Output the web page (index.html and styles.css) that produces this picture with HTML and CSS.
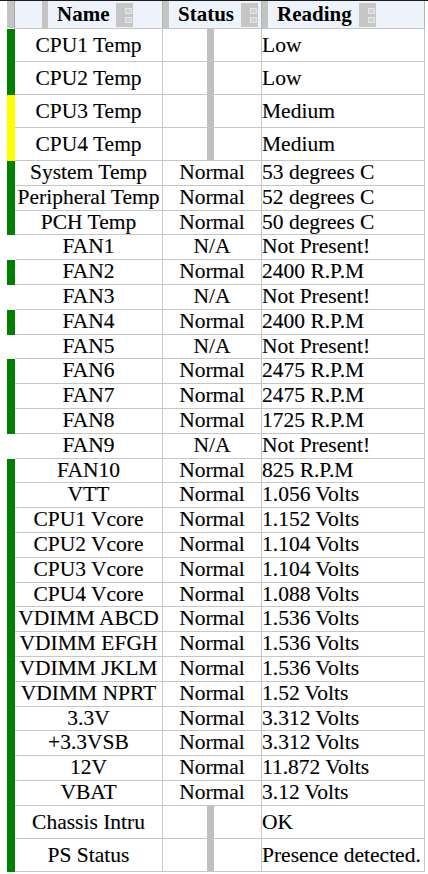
FILE: index.html
```html
<!DOCTYPE html>
<html>
<head>
<meta charset="utf-8">
<link rel="stylesheet" href="styles.css">
</head>
<body>
<table class="grid">
  <colgroup>
    <col class="c-ind"><col class="c-name"><col class="c-status"><col class="c-read">
  </colgroup>
  <thead>
    <tr>
      <th class="ind"></th>
      <th class="name-h"><div class="hc"><span class="grip"></span><span class="lbl">Name</span><svg class="sort" width="17" height="24" viewBox="0 0 17 24"><rect width="17" height="24" fill="#c6c6c6"/><rect x="9.5" y="5.5" width="6" height="5" fill="#d2d2d2" stroke="#e6e6e6"/><rect x="9.5" y="14.5" width="6" height="5" fill="#d2d2d2" stroke="#e6e6e6"/></svg></div></th>
      <th><div class="hc"><span class="grip"></span><span class="lbl">Status</span><svg class="sort" width="17" height="24" viewBox="0 0 17 24"><rect width="17" height="24" fill="#c6c6c6"/><rect x="9.5" y="5.5" width="6" height="5" fill="#d2d2d2" stroke="#e6e6e6"/><rect x="9.5" y="14.5" width="6" height="5" fill="#d2d2d2" stroke="#e6e6e6"/></svg></div></th>
      <th><div class="hc"><span class="grip"></span><span class="lbl">Reading</span><svg class="sort" width="17" height="24" viewBox="0 0 17 24"><rect width="17" height="24" fill="#c6c6c6"/><rect x="9.5" y="5.5" width="6" height="5" fill="#d2d2d2" stroke="#e6e6e6"/><rect x="9.5" y="14.5" width="6" height="5" fill="#d2d2d2" stroke="#e6e6e6"/></svg></div></th>
    </tr>
  </thead>
  <tbody>
    <tr class="tall"><td class="ind g"></td><td class="nm">CPU1 Temp</td><td class="st"></td><td class="rd">Low</td></tr>
    <tr class="tall"><td class="ind g"></td><td class="nm">CPU2 Temp</td><td class="st"></td><td class="rd">Low</td></tr>
    <tr class="tall"><td class="ind y"></td><td class="nm">CPU3 Temp</td><td class="st"></td><td class="rd">Medium</td></tr>
    <tr class="tall"><td class="ind y"></td><td class="nm">CPU4 Temp</td><td class="st"></td><td class="rd">Medium</td></tr>
    <tr><td class="ind g"></td><td class="nm">System Temp</td><td class="st">Normal</td><td class="rd">53 degrees C</td></tr>
    <tr><td class="ind g"></td><td class="nm">Peripheral Temp</td><td class="st">Normal</td><td class="rd">52 degrees C</td></tr>
    <tr><td class="ind g"></td><td class="nm">PCH Temp</td><td class="st">Normal</td><td class="rd">50 degrees C</td></tr>
    <tr><td class="ind"></td><td class="nm">FAN1</td><td class="st">N/A</td><td class="rd">Not Present!</td></tr>
    <tr><td class="ind g"></td><td class="nm">FAN2</td><td class="st">Normal</td><td class="rd">2400 R.P.M</td></tr>
    <tr><td class="ind"></td><td class="nm">FAN3</td><td class="st">N/A</td><td class="rd">Not Present!</td></tr>
    <tr><td class="ind g"></td><td class="nm">FAN4</td><td class="st">Normal</td><td class="rd">2400 R.P.M</td></tr>
    <tr><td class="ind"></td><td class="nm">FAN5</td><td class="st">N/A</td><td class="rd">Not Present!</td></tr>
    <tr><td class="ind g"></td><td class="nm">FAN6</td><td class="st">Normal</td><td class="rd">2475 R.P.M</td></tr>
    <tr><td class="ind g"></td><td class="nm">FAN7</td><td class="st">Normal</td><td class="rd">2475 R.P.M</td></tr>
    <tr><td class="ind g"></td><td class="nm">FAN8</td><td class="st">Normal</td><td class="rd">1725 R.P.M</td></tr>
    <tr><td class="ind"></td><td class="nm">FAN9</td><td class="st">N/A</td><td class="rd">Not Present!</td></tr>
    <tr><td class="ind g"></td><td class="nm">FAN10</td><td class="st">Normal</td><td class="rd">825 R.P.M</td></tr>
    <tr><td class="ind g"></td><td class="nm">VTT</td><td class="st">Normal</td><td class="rd">1.056 Volts</td></tr>
    <tr><td class="ind g"></td><td class="nm">CPU1 Vcore</td><td class="st">Normal</td><td class="rd">1.152 Volts</td></tr>
    <tr><td class="ind g"></td><td class="nm">CPU2 Vcore</td><td class="st">Normal</td><td class="rd">1.104 Volts</td></tr>
    <tr><td class="ind g"></td><td class="nm">CPU3 Vcore</td><td class="st">Normal</td><td class="rd">1.104 Volts</td></tr>
    <tr><td class="ind g"></td><td class="nm">CPU4 Vcore</td><td class="st">Normal</td><td class="rd">1.088 Volts</td></tr>
    <tr><td class="ind g"></td><td class="nm">VDIMM ABCD</td><td class="st">Normal</td><td class="rd">1.536 Volts</td></tr>
    <tr><td class="ind g"></td><td class="nm">VDIMM EFGH</td><td class="st">Normal</td><td class="rd">1.536 Volts</td></tr>
    <tr><td class="ind g"></td><td class="nm">VDIMM JKLM</td><td class="st">Normal</td><td class="rd">1.536 Volts</td></tr>
    <tr><td class="ind g"></td><td class="nm">VDIMM NPRT</td><td class="st">Normal</td><td class="rd">1.52 Volts</td></tr>
    <tr><td class="ind g"></td><td class="nm">3.3V</td><td class="st">Normal</td><td class="rd">3.312 Volts</td></tr>
    <tr><td class="ind g"></td><td class="nm">+3.3VSB</td><td class="st">Normal</td><td class="rd">3.312 Volts</td></tr>
    <tr><td class="ind g"></td><td class="nm">12V</td><td class="st">Normal</td><td class="rd">11.872 Volts</td></tr>
    <tr><td class="ind g"></td><td class="nm">VBAT</td><td class="st">Normal</td><td class="rd">3.12 Volts</td></tr>
    <tr class="tall"><td class="ind g"></td><td class="nm">Chassis Intru</td><td class="st"></td><td class="rd">OK</td></tr>
    <tr class="tall"><td class="ind g"></td><td class="nm">PS Status</td><td class="st"></td><td class="rd">Presence detected.</td></tr>
  </tbody>
</table>
</body>
</html>
```
FILE: styles.css
```css
html, body {
  margin: 0;
  padding: 0;
  background: #fff;
}
body {
  border-top: 1px solid #1c1c1c;
  font-family: "Liberation Serif", "Times New Roman", serif;
  font-size: 21.5px;
  color: #000;
}
.grid {
  border-collapse: separate;
  border-spacing: 0;
  table-layout: fixed;
  width: 418px;
  margin-left: 7px;
}
.c-ind { width: 8px; }
.c-name { width: 148px; }
.c-status { width: 99px; }
.c-read { width: 163px; }

.grid th,
.grid td {
  padding: 0;
  border-right: 1px solid #c6c6c6;
  border-bottom: 1px solid #c6c6c6;
  white-space: nowrap;
  overflow: hidden;
}
.grid td {
  line-height: 23.8px;
  -webkit-text-stroke: 0.12px #000;
}
.grid th {
  background: #eef3fb;
  line-height: 27px;
  height: 27px;
  font-size: 21px;
  font-weight: bold;
  text-align: left;
  border-right-color: #b4b4b4;
}
.grid th.ind {
  background: #c4c4c4;
  border-right: 1px solid #a6a6a6;
  border-bottom-color: #fff;
}
.hc {
  display: flex;
  align-items: center;
  height: 27px;
}
.name-h .hc {
  padding-left: 27px;
}
.grip {
  width: 6px;
  height: 27px;
  background: #c4c4c4;
  flex: none;
}
.lbl {
  margin-left: 9px;
}
.sort {
  margin-left: 7px;
  flex: none;
  display: block;
}

.grid td.ind {
  border-right: none;
  border-bottom: none;
}
.g { background: #008000; }
.y { background: #ffff00; }

.nm, .st { text-align: center; }
.rd { padding-left: 1px; text-align: left; }

.tall td {
  line-height: 32px;
}
.tall .st {
  background: linear-gradient(to right, transparent 44px, #c0c0c0 44px, #c0c0c0 51px, transparent 51px);
}
```
